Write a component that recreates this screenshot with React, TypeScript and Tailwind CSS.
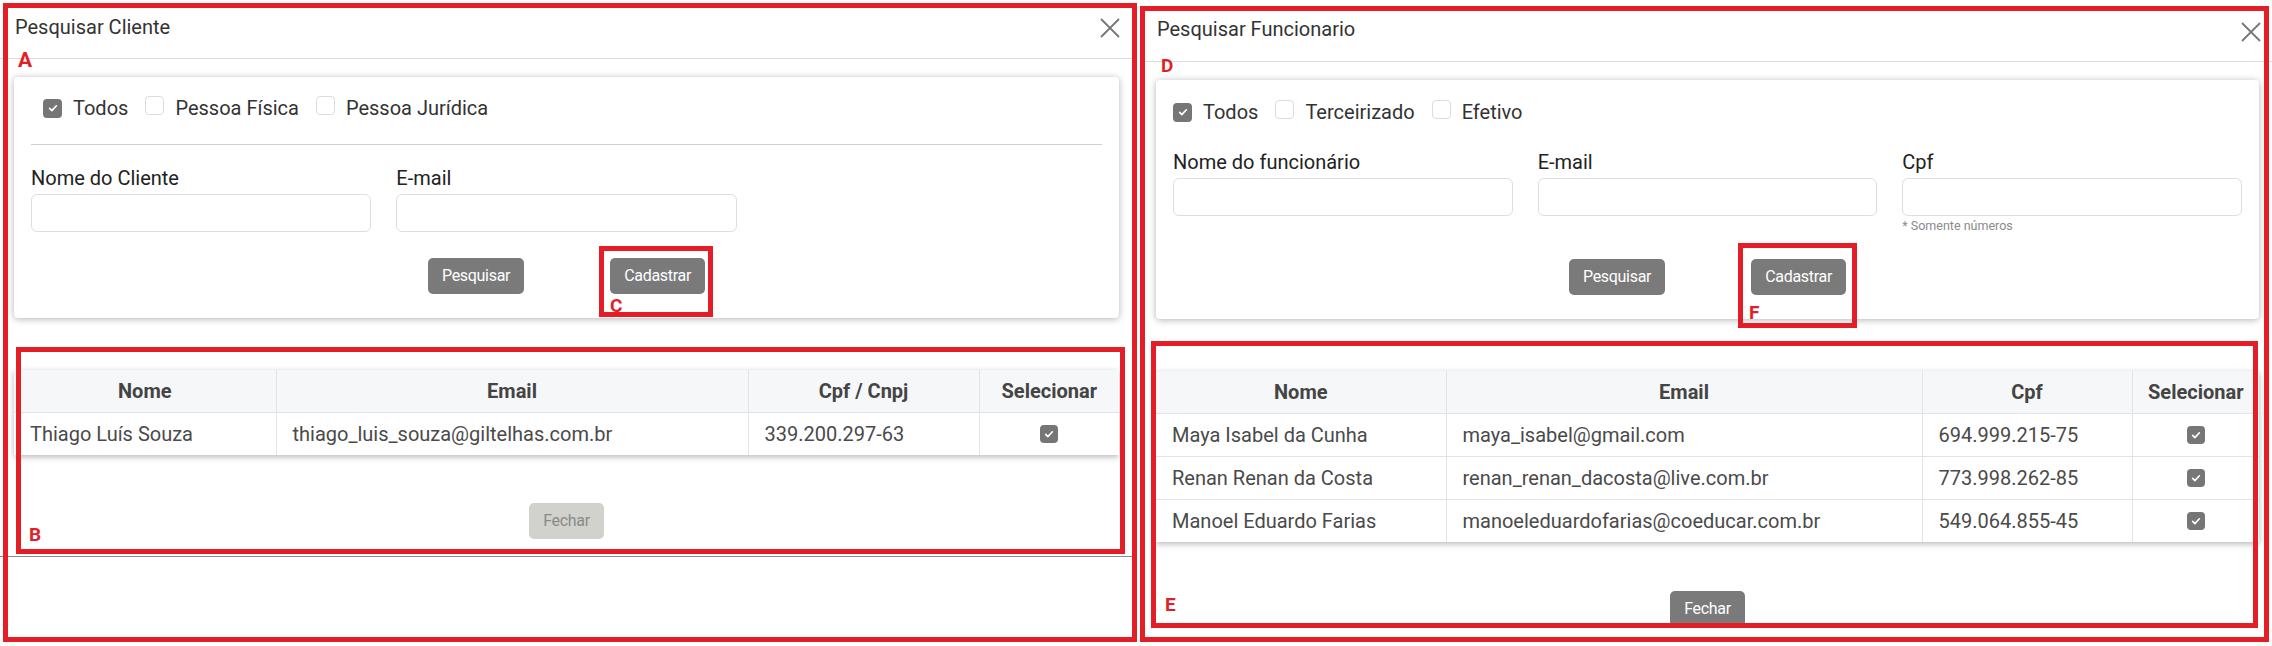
import React from "react"

type Col = { label: string; width: string }

function CheckBox({ checked, size = "w-[19px] h-[19px]" }: { checked?: boolean; size?: string }) {
    return (
        <span
            className={`${size} inline-flex items-center justify-center rounded-[4px] shrink-0 ${
                checked ? "bg-[#767676]" : "bg-white border border-[#dcdcdc]"
            }`}
        >
            {checked && (
                <svg viewBox="0 0 16 16" className="w-[12px] h-[12px]">
                    <path d="M3.5 8.5l3 3L12.5 5" fill="none" stroke="white" strokeWidth="2.2" strokeLinecap="round" strokeLinejoin="round" />
                </svg>
            )}
        </span>
    )
}

function CloseIcon() {
    return (
        <svg viewBox="0 0 20 20" className="w-[20px] h-[20px]">
            <path d="M1 1L19 19M19 1L1 19" stroke="#777" strokeWidth="1.8" />
        </svg>
    )
}

function Field({ label, hint }: { label: string; hint?: string }) {
    return (
        <div className="flex flex-col">
            <label className="text-[20px] leading-[24px] text-[#222]">{label}</label>
            <div className="mt-[4px] h-[38px] rounded-[6px] border border-[#dedede] bg-white" />
            {hint && <span className="mt-[2px] text-[12.5px] leading-[16px] text-[#8a8a8a]">{hint}</span>}
        </div>
    )
}

function Button({ children, muted }: { children: React.ReactNode; muted?: boolean }) {
    return (
        <button
            className={`h-[36px] px-[14px] rounded-[5px] text-[16px] tracking-[-0.3px] ${
                muted ? "bg-[#d1d1cd] text-[#8a8a8a]" : "bg-[#7a7a7a] text-white"
            }`}
        >
            {children}
        </button>
    )
}

function ResultTable({ cols, rows }: { cols: Col[]; rows: string[][] }) {
    return (
        <table className="table-fixed w-full border-collapse bg-white shadow-[0_2px_6px_rgba(0,0,0,0.28)] text-[20px] text-[#4a4a4a]">
            <colgroup>
                {cols.map((c) => (
                    <col key={c.label} className={c.width} />
                ))}
            </colgroup>
            <thead>
                <tr className="bg-[#f6f7f9] h-[42px]">
                    {cols.map((c, i) => (
                        <th
                            key={c.label}
                            className={`font-bold text-center text-[#444] ${i > 0 ? "border-l border-[#e3e3e3]" : ""}`}
                        >
                            {c.label}
                        </th>
                    ))}
                </tr>
            </thead>
            <tbody>
                {rows.map((r, ri) => (
                    <tr key={ri} className="h-[43px] border-t border-[#e3e3e3]">
                        {r.map((cell, ci) => (
                            <td
                                key={ci}
                                className={`px-[16px] whitespace-nowrap ${ci > 0 ? "border-l border-[#e3e3e3]" : ""}`}
                            >
                                {cell}
                            </td>
                        ))}
                        <td className="border-l border-[#e3e3e3]">
                            <div className="flex justify-center">
                                <CheckBox checked size="w-[18px] h-[18px]" />
                            </div>
                        </td>
                    </tr>
                ))}
            </tbody>
        </table>
    )
}

function Annotation({ box, letter, letterPos, size = "text-[19px]" }: { box: string; letter: string; letterPos: string; size?: string }) {
    return (
        <>
            <div className={`absolute border-[5px] border-[#e41e26] pointer-events-none ${box}`} />
            <span className={`absolute font-bold leading-none text-[#e41e26] font-[Roboto] ${size} ${letterPos}`}>{letter}</span>
        </>
    )
}

export default function App() {
    const clientCols: Col[] = [
        { label: "Nome", width: "w-[262px]" },
        { label: "Email", width: "w-[472px]" },
        { label: "Cpf / Cnpj", width: "w-[231px]" },
        { label: "Selecionar", width: "w-[140px]" },
    ]
    const staffCols: Col[] = [
        { label: "Nome", width: "w-[290px]" },
        { label: "Email", width: "w-[476px]" },
        { label: "Cpf", width: "w-[210px]" },
        { label: "Selecionar", width: "w-[127px]" },
    ]
    const staff = [
        ["Maya Isabel da Cunha", "maya_isabel@gmail.com", "694.999.215-75"],
        ["Renan Renan da Costa", "renan_renan_dacosta@live.com.br", "773.998.262-85"],
        ["Manoel Eduardo Farias", "manoeleduardofarias@coeducar.com.br", "549.064.855-45"],
    ]

    return (
        <div className="relative w-[2272px] h-[646px] overflow-hidden bg-white font-[Roboto] flex items-start">
            {/* Pesquisar Cliente */}
            <div className="w-[1134px] border-b border-[#8c8c8c]">
                <div className="h-[59px] border-b border-[#dcdcdc] flex items-start justify-between pl-[15px] pr-[14px] pt-[15px]">
                    <h2 className="text-[20px] leading-[24px] text-[#333]">Pesquisar Cliente</h2>
                    <div className="pt-[3px]"><CloseIcon /></div>
                </div>
                <div className="pl-[14px] pr-[15px] pt-[18px]">
                    <div className="rounded-[4px] bg-white shadow-[0_1px_7px_rgba(0,0,0,0.3)] px-[17px] pt-[19px] pb-[24px]">
                        <div className="h-[24px] flex items-center pl-[12px] text-[20px] text-[#333]">
                            <CheckBox checked />
                            <span className="ml-[11px]">Todos</span>
                            <span className="ml-[17px]"><CheckBox /></span>
                            <span className="ml-[11px]">Pessoa Física</span>
                            <span className="ml-[17px]"><CheckBox /></span>
                            <span className="ml-[11px]">Pessoa Jurídica</span>
                        </div>
                        <div className="mt-[24px] h-px bg-[#cfcfcf]" />
                        <div className="mt-[21px] grid grid-cols-3 gap-x-[25px]">
                            <Field label="Nome do Cliente" />
                            <Field label="E-mail" />
                        </div>
                        <div className="mt-[26px] flex justify-center gap-[86px]">
                            <Button>Pesquisar</Button>
                            <Button>Cadastrar</Button>
                        </div>
                    </div>
                    <div className="mt-[52px]">
                        <ResultTable
                            cols={clientCols}
                            rows={[["Thiago Luís Souza", "thiago_luis_souza@giltelhas.com.br", "339.200.297-63"]]}
                        />
                    </div>
                    <div className="mt-[48px] pb-[17px] flex justify-center">
                        <Button muted>Fechar</Button>
                    </div>
                </div>
            </div>

            {/* Pesquisar Funcionario */}
            <div className="w-[1130px] ml-[8px] mt-[3px]">
                <div className="h-[59px] border-b border-[#dcdcdc] flex items-start justify-between pl-[15px] pr-[11px] pt-[14px]">
                    <h2 className="text-[20px] leading-[24px] text-[#333]">Pesquisar Funcionario</h2>
                    <div className="pt-[5px]"><CloseIcon /></div>
                </div>
                <div className="pl-[14px] pr-[13px] pt-[18px]">
                    <div className="rounded-[4px] bg-white shadow-[0_1px_7px_rgba(0,0,0,0.3)] px-[17px] pt-[20px] pb-[24px]">
                        <div className="h-[24px] flex items-center text-[20px] text-[#333]">
                            <CheckBox checked />
                            <span className="ml-[11px]">Todos</span>
                            <span className="ml-[17px]"><CheckBox /></span>
                            <span className="ml-[11px]">Terceirizado</span>
                            <span className="ml-[17px]"><CheckBox /></span>
                            <span className="ml-[11px]">Efetivo</span>
                        </div>
                        <div className="mt-[26px] grid grid-cols-3 gap-x-[25px]">
                            <Field label="Nome do funcionário" />
                            <Field label="E-mail" />
                            <Field label="Cpf" hint="* Somente números" />
                        </div>
                        <div className="mt-[25px] flex justify-center gap-[86px]">
                            <Button>Pesquisar</Button>
                            <Button>Cadastrar</Button>
                        </div>
                    </div>
                    <div className="mt-[52px]">
                        <ResultTable cols={staffCols} rows={staff} />
                    </div>
                    <div className="mt-[49px] flex justify-center">
                        <Button>Fechar</Button>
                    </div>
                </div>
            </div>

            {/* annotation boxes */}
            <Annotation box="left-[3px] top-[3px] w-[1134px] h-[639px]" letter="A" letterPos="left-[18px] top-[50px]" size="text-[21px]" />
            <Annotation box="left-[16px] top-[347px] w-[1109px] h-[207px]" letter="B" letterPos="left-[29px] top-[525px]" />
            <Annotation box="left-[599px] top-[246px] w-[114px] h-[71px]" letter="C" letterPos="left-[610px] top-[296px]" />
            <Annotation box="left-[1140px] top-[6px] w-[1129px] h-[636px]" letter="D" letterPos="left-[1161px] top-[56px]" />
            <Annotation box="left-[1151px] top-[341px] w-[1107px] h-[287px]" letter="E" letterPos="left-[1165px] top-[595px]" />
            <Annotation box="left-[1738px] top-[243px] w-[119px] h-[85px]" letter="F" letterPos="left-[1749px] top-[303px]" />
        </div>
    )
}
